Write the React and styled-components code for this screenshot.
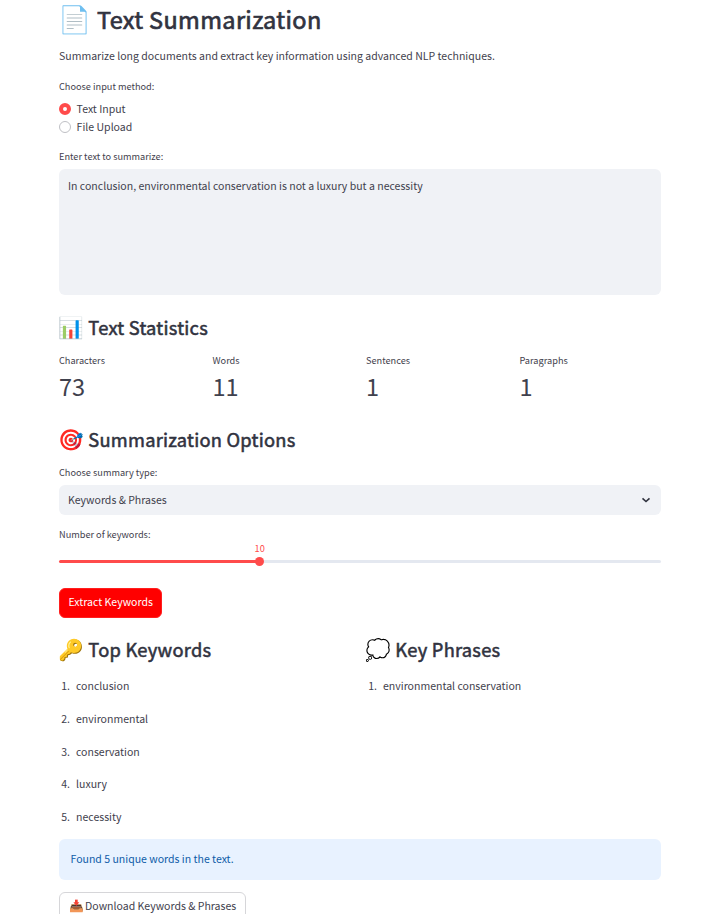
import React from "react";
import styled, { createGlobalStyle } from "styled-components";

const Global = createGlobalStyle`
  * { box-sizing: border-box; }
  html, body { margin: 0; padding: 0; background: #fff; }
  body {
    height: 914px;
    overflow: hidden;
    color: #3f414d;
    font-family: "Noto Sans CJK SC", "Noto Sans", sans-serif;
    font-size: 10.54px;
    line-height: 18px;
  }
`;

const Page = styled.main`
  width: 602px;
  margin-left: 59px;
  display: flex;
  flex-direction: column;
  align-items: stretch;
`;

const Title = styled.h1`
  margin: 0;
  height: 37px;
  display: flex;
  align-items: center;
  line-height: 36px;
  font-size: 23.5px;
  font-weight: 400;
  letter-spacing: 0.35px;
  -webkit-text-stroke: 0.7px #31333f;
  color: #31333f;
  white-space: nowrap;
`;

const Heading = styled.h2`
  margin: ${(p) => p.$top}px 0 0;
  height: 30px;
  display: flex;
  align-items: center;
  line-height: 30px;
  font-size: 18.3px;
  font-weight: 400;
  letter-spacing: 0.25px;
  -webkit-text-stroke: 0.55px #31333f;
  color: #31333f;
  white-space: nowrap;
`;

const Emoji = styled.span`
  flex: none;
  width: ${(p) => p.$width}px;
  margin-left: -0.7px;
  padding-bottom: 2px;
  font-size: ${(p) => p.$size}px;
  letter-spacing: 0;
  -webkit-text-stroke: 0;
`;

const Intro = styled.p`
  margin: 10px 0 0;
`;

const Label = styled.div`
  margin-top: ${(p) => p.$top || 0}px;
  height: 14px;
  line-height: 14px;
  font-size: 9.2px;
`;

const RadioGroup = styled.div`
  margin-top: 7px;
  margin-bottom: 1px;
  display: flex;
  flex-direction: column;
`;

const RadioRow = styled.label`
  display: flex;
  align-items: center;
  gap: 6px;
  height: 18px;
`;

const RadioMark = styled.span`
  width: 12px;
  height: 12px;
  margin-left: -0.4px;
  border-radius: 50%;
  background: #fff;
  border: ${(p) => (p.$on ? "4px solid #ff4b4b" : "1px solid #bfc0c5")};
`;

const TextArea = styled.div`
  margin-top: 6px;
  height: 126px;
  padding: 8px 9px;
  border-radius: 6px;
  background: #f0f2f6;
`;

const Columns = styled.div`
  display: grid;
  grid-template-columns: repeat(${(p) => p.$count}, 1fr);
  column-gap: 12px;
`;

const MetricValue = styled.div`
  height: 38px;
  line-height: 38px;
  font-size: 23.6px;
`;

const Select = styled.div`
  margin-top: 6px;
  height: 30px;
  padding: 0 9px;
  display: flex;
  align-items: center;
  justify-content: space-between;
  border-radius: 6px;
  background: #f0f2f6;
`;

const Slider = styled.div`
  height: 24px;
  position: relative;
`;

const Track = styled.div`
  position: absolute;
  left: 0;
  right: 0;
  top: 19px;
  height: 3px;
  border-radius: 2px;
  background: linear-gradient(to right, #ff4b4b 33.33%, #e4e8f0 33.33%);
`;

const Thumb = styled.div`
  position: absolute;
  left: 33.33%;
  top: 16px;
  width: 9px;
  height: 9px;
  margin-left: -4.5px;
  border-radius: 50%;
  background: #ff4b4b;
`;

const ThumbValue = styled.div`
  position: absolute;
  left: 33.33%;
  top: 0;
  transform: translateX(-50%);
  line-height: 14px;
  font-size: 9.2px;
  color: #ff4b4b;
`;

const Button = styled.button`
  align-self: flex-start;
  margin: ${(p) => p.$top}px 0 0;
  height: 30px;
  width: ${(p) => p.$width}px;
  padding: 0 0 2px;
  display: flex;
  align-items: center;
  justify-content: center;
  white-space: nowrap;
  border-radius: 6px;
  border: 1px solid ${(p) => (p.$primary ? "#ff1f1f" : "#d6d6d9")};
  background: ${(p) => (p.$primary ? "#ff0000" : "#fff")};
  color: ${(p) => (p.$primary ? "#fff" : "#3f414d")};
  font: inherit;
`;

const List = styled.div`
  height: 166px;
  margin-top: 13px;
`;

const Item = styled.div`
  height: 32.8px;
  display: flex;
`;

const Num = styled.span`
  width: 11px;
  margin-right: 6px;
  text-align: right;
`;

const Notice = styled.div`
  margin-top: -4px;
  height: 41px;
  padding: 0 11.5px;
  line-height: 40px;
  border-radius: 6px;
  background: #e8f2ff;
  color: #0f5ca8;
`;

const metrics = [["Characters", 73], ["Words", 11], ["Sentences", 1], ["Paragraphs", 1]];
const keywords = ["conclusion", "environmental", "conservation", "luxury", "necessity"];
const phrases = ["environmental conservation"];

function SectionHeading({ icon, top, children }) {
  return (
    <Heading $top={top}>
      <Emoji $size={20.6} $width={30}>{icon}</Emoji>
      {children}
    </Heading>
  );
}

function Ranked({ icon, title, items }) {
  return (
    <section>
      <SectionHeading icon={icon} top={16}>{title}</SectionHeading>
      <List>
        {items.map((text, i) => (
          <Item key={text}><Num>{i + 1}.</Num>{text}</Item>
        ))}
      </List>
    </section>
  );
}

export default function App() {
  return (
    <>
      <Global />
      <Page>
        <Title><Emoji $size={26.5} $width={38.7}>📄</Emoji>Text Summarization</Title>
        <Intro>Summarize long documents and extract key information using advanced NLP techniques.</Intro>
        <Label $top={14}>Choose input method:</Label>
        <RadioGroup>
          <RadioRow><RadioMark $on />Text Input</RadioRow>
          <RadioRow><RadioMark />File Upload</RadioRow>
        </RadioGroup>
        <Label $top={12}>Enter text to summarize:</Label>
        <TextArea>In conclusion, environmental conservation is not a luxury but a necessity</TextArea>
        <SectionHeading icon="📊" top={17}>Text Statistics</SectionHeading>
        <Columns $count={4}>
          {metrics.map(([name, value]) => (
            <div key={name}>
              <Label $top={11}>{name}</Label>
              <MetricValue>{value}</MetricValue>
            </div>
          ))}
        </Columns>
        <SectionHeading icon="🎯" top={19}>Summarization Options</SectionHeading>
        <Label $top={11}>Choose summary type:</Label>
        <Select>
          Keywords &amp; Phrases
          <svg width="12" height="12" viewBox="0 0 12 12" fill="none" stroke="#31333f" strokeWidth="1.6">
            <path d="M2.5 4.3 6 7.5 9.5 4.3" />
          </svg>
        </Select>
        <Label $top={12}>Number of keywords:</Label>
        <Slider>
          <Track />
          <Thumb />
          <ThumbValue>10</ThumbValue>
        </Slider>
        <Button $top={23} $width={103.4} $primary>Extract Keywords</Button>
        <Columns $count={2}>
          <Ranked icon="🔑" title="Top Keywords" items={keywords} />
          <Ranked icon="💭" title="Key Phrases" items={phrases} />
        </Columns>
        <Notice>Found 5 unique words in the text.</Notice>
        <Button $top={12} $width={187}>
          <Emoji $size={11.8} $width={17}>📥</Emoji>
          Download Keywords &amp; Phrases
        </Button>
      </Page>
    </>
  );
}
